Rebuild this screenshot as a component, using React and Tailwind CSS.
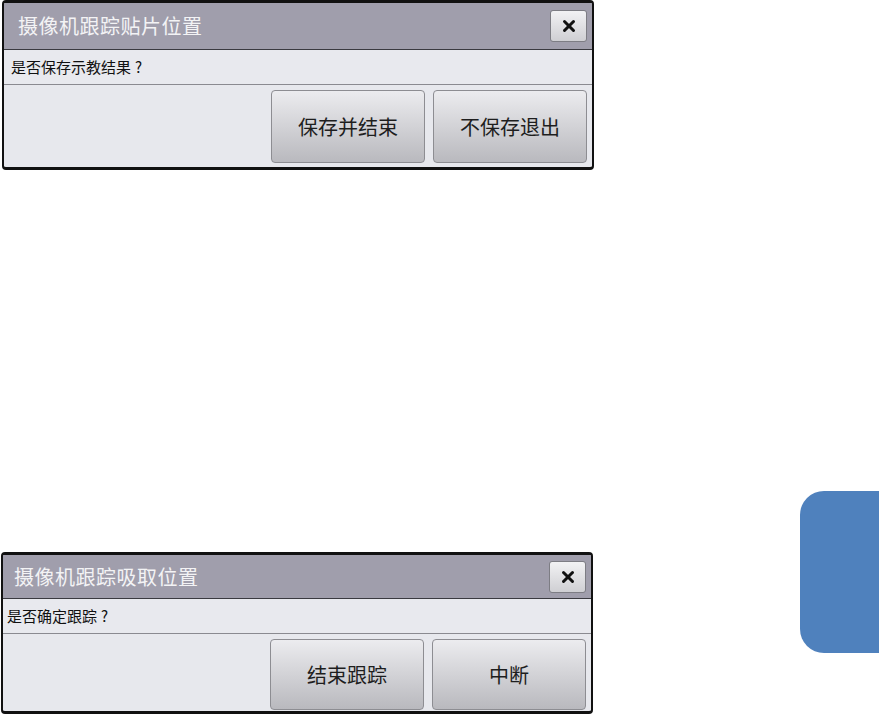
import { X } from 'lucide-react'

const font = { fontFamily: '"Noto Sans CJK SC", "Noto Sans", sans-serif' }

function DialogButton({ label, tall }) {
  return (
    <button className={`w-[154px] ${tall ? 'h-[73px]' : 'h-[71px]'} rounded-[4px] border border-[#8d8d92] bg-gradient-to-b from-[#ececef] to-[#b9b9be] text-[20px] text-[#1e1e1e]`}>
      {label}
    </button>
  )
}

function Dialog({ title, message, buttons, tall, className }) {
  return (
    <div className={`w-[592px] rounded-[4px] border-[#111] border-x-[2px] border-t-[3px] border-b-[3px] bg-[#e7e8ed] overflow-hidden ${className}`}>
      <div className={`${tall ? 'h-[47px] pl-[14px]' : 'h-[44px] pl-[11px]'} bg-[#a09eac] flex items-center justify-between pr-[5px] border-b border-[#3a3a40]`}>
        <span className="text-[20px] text-[#f3f3f5] tracking-[0.5px]">{title}</span>
        <button className="w-[37px] h-[32px] rounded-[3px] border border-[#7d7d84] bg-gradient-to-b from-[#f2f2f4] to-[#cfcfd3] flex items-center justify-center">
          <X size={18} strokeWidth={4} color="#111" />
        </button>
      </div>
      <div className={`h-[35px] ${tall ? 'pl-[7px]' : 'pl-[4px]'} bg-[#e8e9ee] flex items-center text-[15px] text-[#111] border-b border-[#8a8a90]`}>
        {message}<span className="ml-[4px]">?</span>
      </div>
      <div className={`flex justify-end gap-[8px] pr-[5px] pt-[5px] ${tall ? 'pb-[4px]' : 'pb-[1px]'}`}>
        {buttons.map(b => <DialogButton key={b} label={b} tall={tall} />)}
      </div>
    </div>
  )
}

export default function App() {
  return (
    <div className="relative w-[879px] h-[716px] bg-white overflow-hidden" style={font}>
      <Dialog
        tall
        className="ml-[2px]"
        title="摄像机跟踪贴片位置"
        message="是否保存示教结果"
        buttons={['保存并结束', '不保存退出']}
      />
      <Dialog
        className="ml-[1px] mt-[382px]"
        title="摄像机跟踪吸取位置"
        message="是否确定跟踪"
        buttons={['结束跟踪', '中断']}
      />
      <div className="absolute left-[800px] top-[491px] w-[79px] h-[162px] rounded-l-[24px] bg-[#4f81bd]" />
    </div>
  )
}
